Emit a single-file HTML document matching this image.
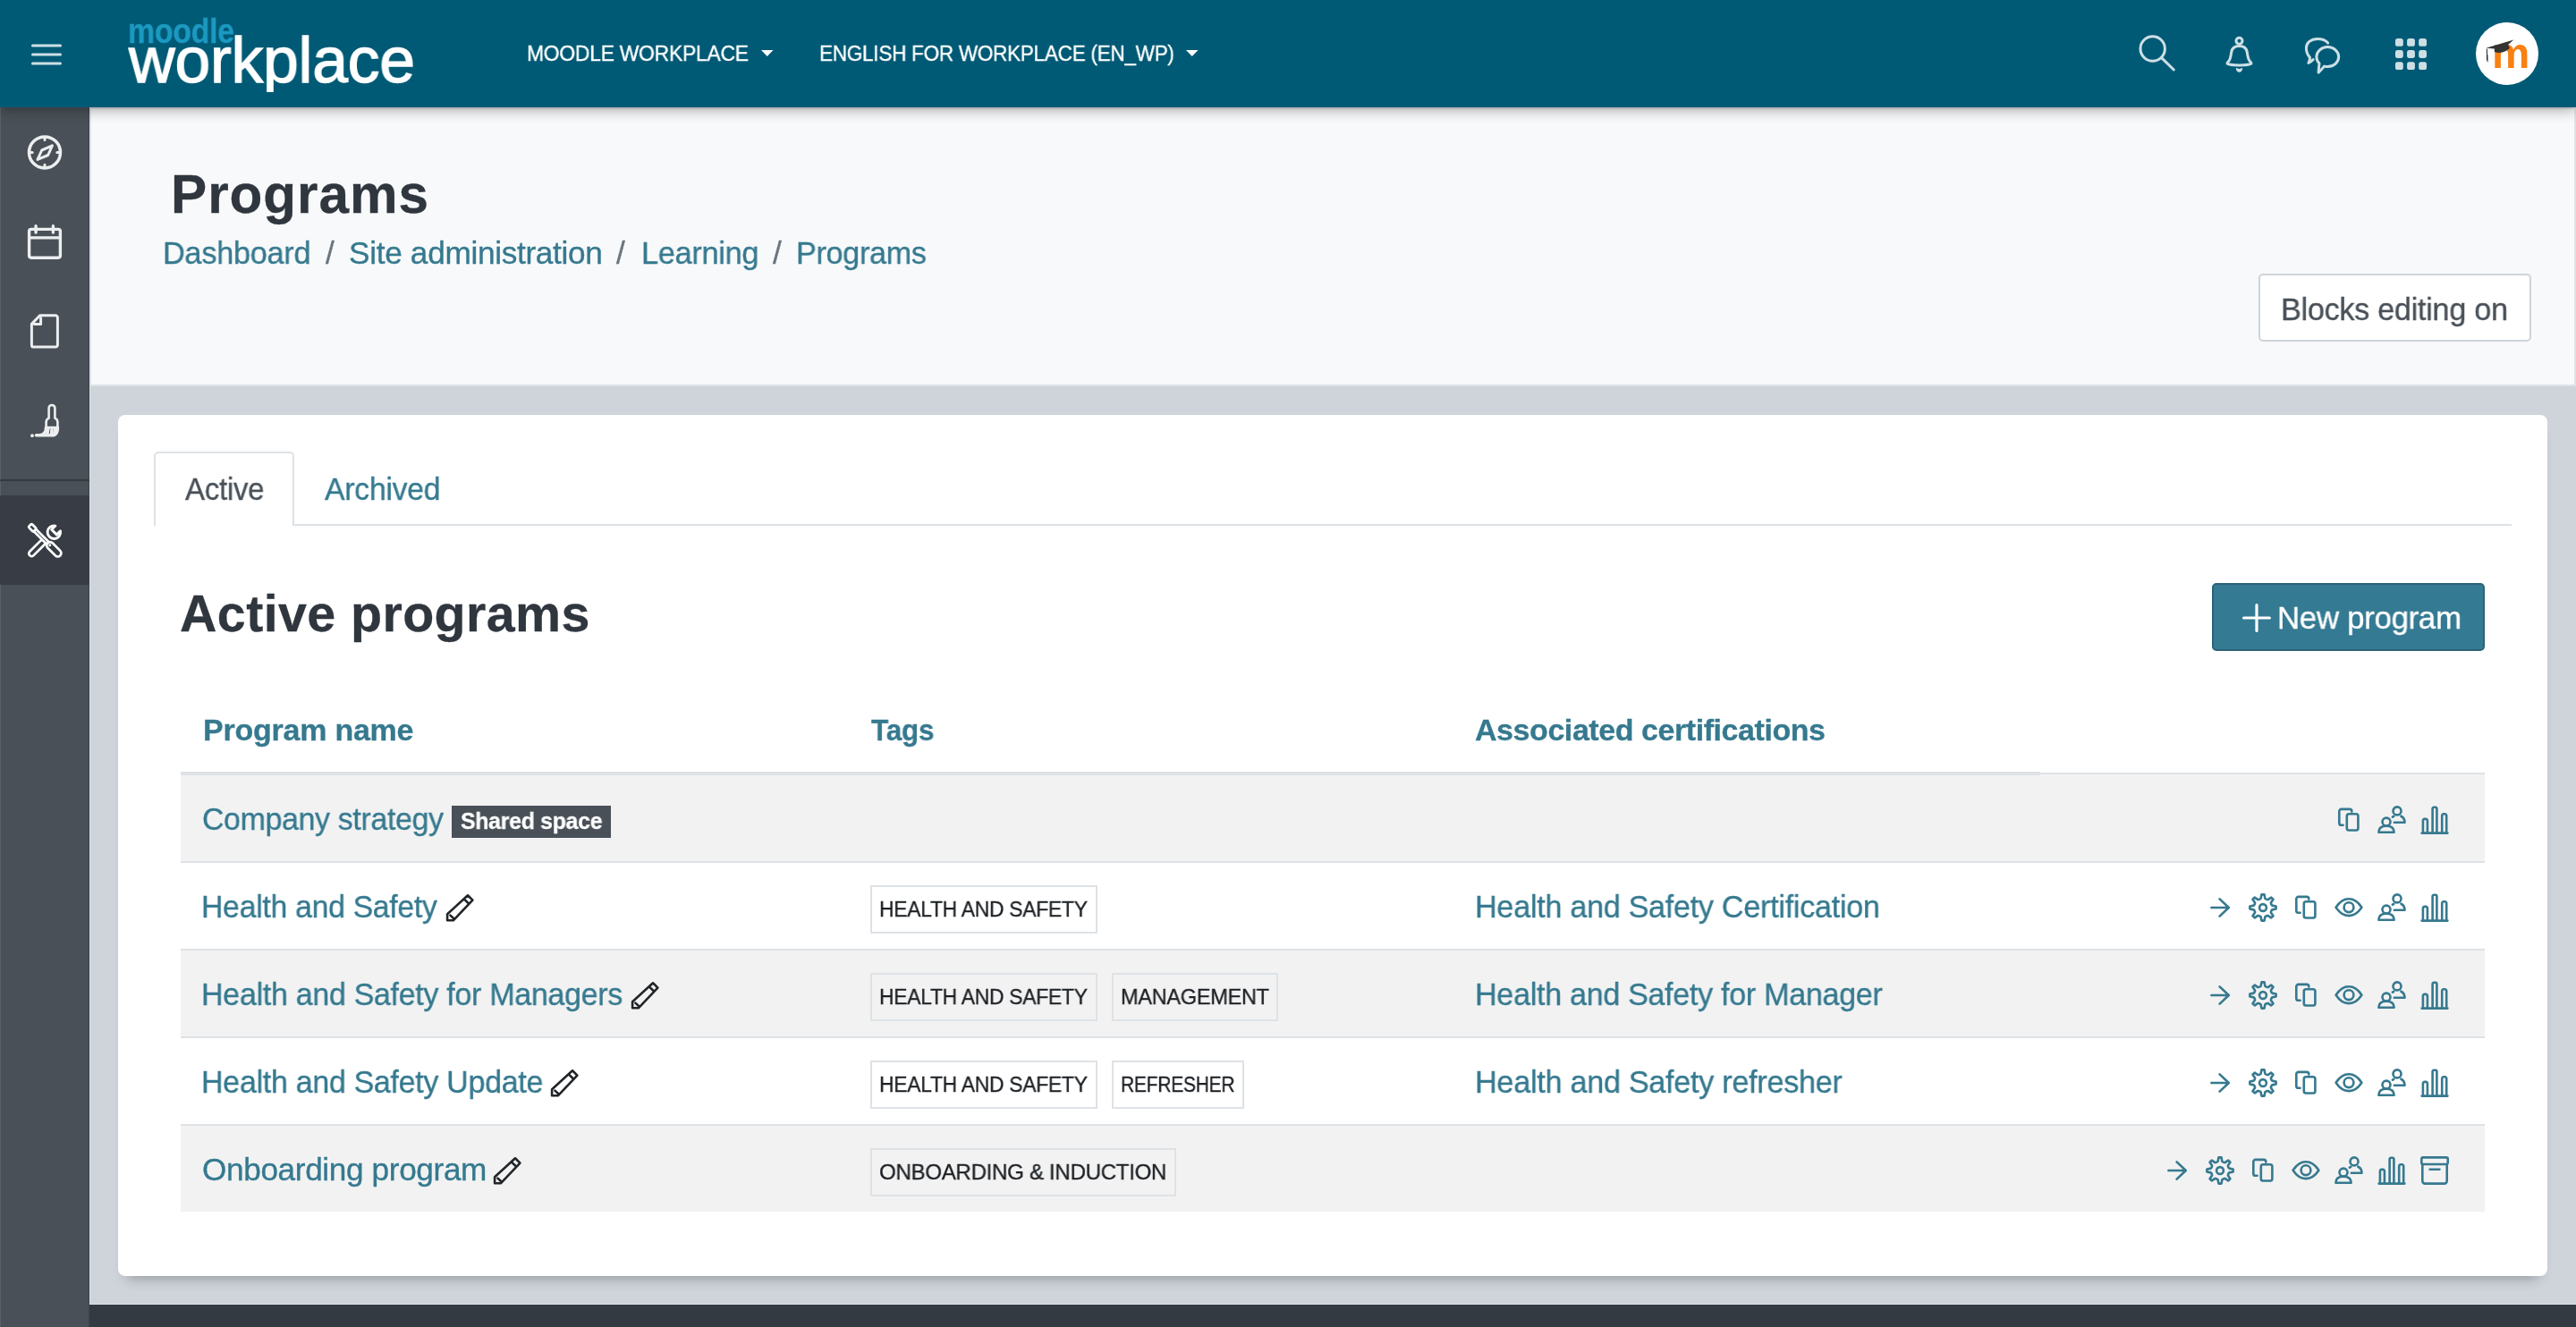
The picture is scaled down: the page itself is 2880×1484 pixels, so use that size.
<!DOCTYPE html>
<html lang="en"><head><meta charset="utf-8"><title>Programs</title>
<style>
*{box-sizing:border-box;margin:0;padding:0}
html,body{width:2880px;height:1484px;overflow:hidden}
body{position:relative;background:#ced4da;font-family:"Liberation Sans",sans-serif;color:#343a40}
.t{position:absolute;white-space:nowrap;line-height:1;display:block;will-change:transform}
a.t,a{color:#35798f;text-decoration:none}
svg{position:absolute;overflow:visible}
.abs{position:absolute}
#nav{position:absolute;left:0;top:0;width:2880px;height:120px;background:#005a75;box-shadow:0 3px 14px rgba(0,0,0,.33);z-index:10}
#side{position:absolute;left:0;top:120px;width:100px;height:1364px;background:#495057;z-index:5}
#side .act{position:absolute;left:0;top:434px;width:100px;height:100px;background:#383d45}
#side .div{position:absolute;left:0;top:416px;width:100px;height:2px;background:#343a40}
#hdr{position:absolute;left:100px;top:120px;width:2780px;height:312px;background:#f8f9fa;border:2px solid #dee2e6}
#card{position:absolute;left:132px;top:464px;width:2716px;height:963px;background:#fff;border-radius:8px;box-shadow:0 12px 14px -10px rgba(0,0,0,.31)}
#foot{position:absolute;left:100px;top:1458px;width:2780px;height:26px;background:#343a42;border-top:1px solid #dee2e6}
.btn{position:absolute;border-radius:5px}
.tag{position:absolute;height:54px;border:2px solid #dee2e6}
.row{position:absolute;left:202px;width:2576px;height:96px}
.row.s{background:#f2f2f2}
.hr{position:absolute;left:202px;width:2576px;height:2px;background:#dee2e6}
</style></head>
<body>
<div id="hdr"></div>
<div class="abs" id="hdrc" style="left:0;top:0">
<h1 class="t" style="left:190.5px;top:186.5px;font-size:60.3px;letter-spacing:0.927px;font-weight:700;color:#30363e;-webkit-text-stroke:0.3px;">Programs</h1>
<nav>
<a class="t" style="left:181.5px;top:265.2px;font-size:35.2px;letter-spacing:-0.300px;transform:scaleX(0.9747);transform-origin:0 0;-webkit-text-stroke:0.35px;">Dashboard</a>
<span class="t" style="left:364.0px;top:265.2px;font-size:35.2px;letter-spacing:0.000px;color:#6c757d;-webkit-text-stroke:0.35px;">/</span>
<a class="t" style="left:390.0px;top:265.2px;font-size:35.2px;letter-spacing:-0.309px;-webkit-text-stroke:0.35px;">Site administration</a>
<span class="t" style="left:689.0px;top:265.2px;font-size:35.2px;letter-spacing:0.000px;color:#6c757d;-webkit-text-stroke:0.35px;">/</span>
<a class="t" style="left:716.5px;top:265.2px;font-size:35.2px;letter-spacing:-0.300px;transform:scaleX(0.9748);transform-origin:0 0;-webkit-text-stroke:0.35px;">Learning</a>
<span class="t" style="left:864.0px;top:265.2px;font-size:35.2px;letter-spacing:0.000px;color:#6c757d;-webkit-text-stroke:0.35px;">/</span>
<a class="t" style="left:890.0px;top:265.2px;font-size:35.2px;letter-spacing:-0.300px;transform:scaleX(0.9703);transform-origin:0 0;-webkit-text-stroke:0.35px;">Programs</a>
</nav>
<div class="btn" style="left:2525px;top:306px;width:304.5px;height:75.5px;background:#fff;border:2px solid #ced4da"></div>
<button class="t" style="left:2550.0px;top:327.7px;font-size:35.2px;letter-spacing:-0.300px;transform:scaleX(0.9720);transform-origin:0 0;color:#495057;-webkit-text-stroke:0.35px;background:none;border:0;font-family:inherit;">Blocks editing on</button>
</div>
<section id="card"></section>
<div class="abs" style="left:0;top:0">
<div class="abs" style="left:172px;top:585.5px;width:2636px;height:2px;background:#dee2e6"></div>
<div class="abs" style="left:172px;top:505px;width:157px;height:83px;background:#fff;border:2px solid #dee2e6;border-bottom:0;border-radius:5px 5px 0 0"></div>
<a class="t" style="left:206.5px;top:529.0px;font-size:35.2px;letter-spacing:-0.300px;transform:scaleX(0.9380);transform-origin:0 0;color:#495057;-webkit-text-stroke:0.35px;">Active</a>
<a class="t" style="left:362.5px;top:529.0px;font-size:35.2px;letter-spacing:-0.300px;transform:scaleX(0.9603);transform-origin:0 0;-webkit-text-stroke:0.35px;">Archived</a>
<h2 class="t" style="left:201.0px;top:658.4px;font-size:57.4px;letter-spacing:0.394px;font-weight:700;color:#30363e;-webkit-text-stroke:0.3px;">Active programs</h2>
<div class="btn" style="left:2473px;top:652px;width:305px;height:76px;background:#357a93;border:2px solid #2b6379"></div>
<svg style="left:2506.5px;top:675px" width="32" height="32" viewBox="0 0 32 32" fill="none" stroke="#fff" stroke-width="3.2" stroke-linecap="round" stroke-linejoin="round"><path d="M16 1.6V30.4M1.6 16H30.4"/></svg>
<button class="t" style="left:2546.0px;top:673.0px;font-size:35.2px;letter-spacing:-0.300px;transform:scaleX(0.9891);transform-origin:0 0;color:#fff;-webkit-text-stroke:0.35px;background:none;border:0;font-family:inherit;">New program</button>
<a class="t" style="left:226.5px;top:799.2px;font-size:34.0px;letter-spacing:-0.235px;font-weight:700;color:#36798f;-webkit-text-stroke:0.3px;">Program name</a>
<a class="t" style="left:973.5px;top:799.2px;font-size:34.0px;letter-spacing:-0.300px;transform:scaleX(0.9285);transform-origin:0 0;font-weight:700;color:#36798f;-webkit-text-stroke:0.3px;">Tags</a>
<a class="t" style="left:1649.0px;top:799.2px;font-size:34.0px;letter-spacing:-0.436px;font-weight:700;color:#36798f;-webkit-text-stroke:0.3px;">Associated certifications</a>
<div class="abs" style="left:202px;top:863px;width:2078.5px;height:4px;background:#dee2e6"></div>
<div class="abs" style="left:2280px;top:864px;width:498px;height:2px;background:#dee2e6"></div>
<div class="abs" style="left:2280.5px;top:866px;width:497.5px;height:1px;background:#f2f2f2"></div>
<div class="row s" style="top:867px"></div>
<div class="hr" style="top:963px"></div>
<a class="t" style="left:225.5px;top:898.2px;font-size:35.2px;letter-spacing:-0.300px;transform:scaleX(0.9604);transform-origin:0 0;-webkit-text-stroke:0.35px;">Company strategy</a>
<div class="abs" style="left:504.5px;top:900.5px;width:178px;height:36.5px;background:#495057"></div>
<span class="t" style="left:514.5px;top:905.8px;font-size:25.6px;letter-spacing:-0.300px;transform:scaleX(0.9713);transform-origin:0 0;font-weight:700;color:#fff;-webkit-text-stroke:0.3px;">Shared space</span>
<svg style="left:2610px;top:900.8px" width="32" height="32" viewBox="0 0 32 32" fill="none" stroke="#36798f" stroke-width="2.6" stroke-linecap="round" stroke-linejoin="round"><path d="M19.3 6.6V6.2a2.3 2.3 0 0 0-2.3-2.3H7.6a2.3 2.3 0 0 0-2.3 2.3V19.4a2.3 2.3 0 0 0 2.3 2.3H9.6"/><rect x="13.8" y="9.3" width="12.6" height="18.2" rx="2.3"/></svg>
<svg style="left:2658px;top:900.8px" width="32" height="32" viewBox="0 0 32 32" fill="none" stroke="#36798f" stroke-width="2.6" stroke-linecap="round" stroke-linejoin="round"><circle cx="10" cy="18.1" r="4.5"/><path d="M1.4 29.8C1.4 25 5 22.7 10 22.7S18.6 25 18.6 29.8Z"/><circle cx="22" cy="5.9" r="4.5"/><path d="M16.9 12.7L18.3 11.8M26.4 11.7C29 12.9 30.4 15 30.5 18.7H18.8"/></svg>
<svg style="left:2706px;top:900.8px" width="32" height="32" viewBox="0 0 32 32" fill="none" stroke="#36798f" stroke-width="2.6" stroke-linecap="round" stroke-linejoin="round"><path d="M1.6 30.6H30.4M2.9 30.6V16.6a1.7 1.7 0 0 1 1.7-1.7h1.6a1.7 1.7 0 0 1 1.7 1.7V30.6M13.6 30.6V3.4a1.7 1.7 0 0 1 1.7-1.7h1.4a1.7 1.7 0 0 1 1.7 1.7V30.6M24.2 30.6V11a1.7 1.7 0 0 1 1.7-1.7h1.6a1.7 1.7 0 0 1 1.7 1.7V30.6"/></svg>
<div class="row" style="top:965px"></div>
<div class="hr" style="top:1061px"></div>
<a class="t" style="left:224.5px;top:996.2px;font-size:35.2px;letter-spacing:-0.300px;transform:scaleX(0.9599);transform-origin:0 0;-webkit-text-stroke:0.35px;">Health and Safety</a>
<svg style="left:497.5px;top:998.5px" width="32" height="32" viewBox="0 0 32 32" fill="none" stroke="#212529" stroke-width="2.6" stroke-linecap="round" stroke-linejoin="round"><path d="M25 2.3L30.4 7.6L8.8 30.3H2.1V23.3ZM20.8 6.4L26.3 11.8M5.4 24.6L8.8 27.8"/></svg>
<div class="tag" style="left:973px;top:990px;width:254px"></div>
<span class="t" style="left:983.0px;top:1005.1px;font-size:24.4px;letter-spacing:-0.300px;transform:scaleX(0.9384);transform-origin:0 0;color:#1d2125;-webkit-text-stroke:0.35px;">HEALTH AND SAFETY</span>
<a class="t" style="left:1648.5px;top:996.2px;font-size:35.2px;letter-spacing:-0.300px;transform:scaleX(0.9711);transform-origin:0 0;-webkit-text-stroke:0.35px;">Health and Safety Certification</a>
<svg style="left:2466px;top:998.8px" width="32" height="32" viewBox="0 0 32 32" fill="none" stroke="#36798f" stroke-width="2.6" stroke-linecap="round" stroke-linejoin="round"><path d="M6.4 16H25.6M15.6 6.4L25.8 16L15.6 25.6"/></svg>
<svg style="left:2514px;top:998.8px" width="32" height="32" viewBox="0 0 32 32" fill="none" stroke="#36798f" stroke-width="2.6" stroke-linecap="round" stroke-linejoin="round"><path d="M12.17 6.76 L13.63 5.77 L14.44 1.38 L17.56 1.38 L18.37 5.77 L19.83 6.76 L21.56 7.09 L25.24 4.56 L27.44 6.76 L24.91 10.44 L25.24 12.17 L26.23 13.63 L30.62 14.44 L30.62 17.56 L26.23 18.37 L25.24 19.83 L24.91 21.56 L27.44 25.24 L25.24 27.44 L21.56 24.91 L19.83 25.24 L18.37 26.23 L17.56 30.62 L14.44 30.62 L13.63 26.23 L12.17 25.24 L10.44 24.91 L6.76 27.44 L4.56 25.24 L7.09 21.56 L6.76 19.83 L5.77 18.37 L1.38 17.56 L1.38 14.44 L5.77 13.63 L6.76 12.17 L7.09 10.44 L4.56 6.76 L6.76 4.56 L10.44 7.09Z"/><circle cx="16" cy="16" r="3.9"/></svg>
<svg style="left:2562px;top:998.8px" width="32" height="32" viewBox="0 0 32 32" fill="none" stroke="#36798f" stroke-width="2.6" stroke-linecap="round" stroke-linejoin="round"><path d="M19.3 6.6V6.2a2.3 2.3 0 0 0-2.3-2.3H7.6a2.3 2.3 0 0 0-2.3 2.3V19.4a2.3 2.3 0 0 0 2.3 2.3H9.6"/><rect x="13.8" y="9.3" width="12.6" height="18.2" rx="2.3"/></svg>
<svg style="left:2610px;top:998.8px" width="32" height="32" viewBox="0 0 32 32" fill="none" stroke="#36798f" stroke-width="2.6" stroke-linecap="round" stroke-linejoin="round"><path d="M1.6 15.7C6 9 11 6.3 16 6.3S26 9 30.4 15.7C26 22.4 21 25.1 16 25.1S6 22.4 1.6 15.7Z"/><circle cx="16" cy="15.7" r="5.4"/></svg>
<svg style="left:2658px;top:998.8px" width="32" height="32" viewBox="0 0 32 32" fill="none" stroke="#36798f" stroke-width="2.6" stroke-linecap="round" stroke-linejoin="round"><circle cx="10" cy="18.1" r="4.5"/><path d="M1.4 29.8C1.4 25 5 22.7 10 22.7S18.6 25 18.6 29.8Z"/><circle cx="22" cy="5.9" r="4.5"/><path d="M16.9 12.7L18.3 11.8M26.4 11.7C29 12.9 30.4 15 30.5 18.7H18.8"/></svg>
<svg style="left:2706px;top:998.8px" width="32" height="32" viewBox="0 0 32 32" fill="none" stroke="#36798f" stroke-width="2.6" stroke-linecap="round" stroke-linejoin="round"><path d="M1.6 30.6H30.4M2.9 30.6V16.6a1.7 1.7 0 0 1 1.7-1.7h1.6a1.7 1.7 0 0 1 1.7 1.7V30.6M13.6 30.6V3.4a1.7 1.7 0 0 1 1.7-1.7h1.4a1.7 1.7 0 0 1 1.7 1.7V30.6M24.2 30.6V11a1.7 1.7 0 0 1 1.7-1.7h1.6a1.7 1.7 0 0 1 1.7 1.7V30.6"/></svg>
<div class="row s" style="top:1063px"></div>
<div class="hr" style="top:1159px"></div>
<a class="t" style="left:224.5px;top:1094.2px;font-size:35.2px;letter-spacing:-0.300px;transform:scaleX(0.9656);transform-origin:0 0;-webkit-text-stroke:0.35px;">Health and Safety for Managers</a>
<svg style="left:704.5px;top:1096.5px" width="32" height="32" viewBox="0 0 32 32" fill="none" stroke="#212529" stroke-width="2.6" stroke-linecap="round" stroke-linejoin="round"><path d="M25 2.3L30.4 7.6L8.8 30.3H2.1V23.3ZM20.8 6.4L26.3 11.8M5.4 24.6L8.8 27.8"/></svg>
<div class="tag" style="left:973px;top:1088px;width:254px"></div>
<span class="t" style="left:983.0px;top:1103.1px;font-size:24.4px;letter-spacing:-0.300px;transform:scaleX(0.9384);transform-origin:0 0;color:#1d2125;-webkit-text-stroke:0.35px;">HEALTH AND SAFETY</span>
<div class="tag" style="left:1243px;top:1088px;width:186px"></div>
<span class="t" style="left:1253.0px;top:1103.1px;font-size:24.4px;letter-spacing:-0.300px;transform:scaleX(0.9641);transform-origin:0 0;color:#1d2125;-webkit-text-stroke:0.35px;">MANAGEMENT</span>
<a class="t" style="left:1648.5px;top:1094.2px;font-size:35.2px;letter-spacing:-0.300px;transform:scaleX(0.9682);transform-origin:0 0;-webkit-text-stroke:0.35px;">Health and Safety for Manager</a>
<svg style="left:2466px;top:1096.8px" width="32" height="32" viewBox="0 0 32 32" fill="none" stroke="#36798f" stroke-width="2.6" stroke-linecap="round" stroke-linejoin="round"><path d="M6.4 16H25.6M15.6 6.4L25.8 16L15.6 25.6"/></svg>
<svg style="left:2514px;top:1096.8px" width="32" height="32" viewBox="0 0 32 32" fill="none" stroke="#36798f" stroke-width="2.6" stroke-linecap="round" stroke-linejoin="round"><path d="M12.17 6.76 L13.63 5.77 L14.44 1.38 L17.56 1.38 L18.37 5.77 L19.83 6.76 L21.56 7.09 L25.24 4.56 L27.44 6.76 L24.91 10.44 L25.24 12.17 L26.23 13.63 L30.62 14.44 L30.62 17.56 L26.23 18.37 L25.24 19.83 L24.91 21.56 L27.44 25.24 L25.24 27.44 L21.56 24.91 L19.83 25.24 L18.37 26.23 L17.56 30.62 L14.44 30.62 L13.63 26.23 L12.17 25.24 L10.44 24.91 L6.76 27.44 L4.56 25.24 L7.09 21.56 L6.76 19.83 L5.77 18.37 L1.38 17.56 L1.38 14.44 L5.77 13.63 L6.76 12.17 L7.09 10.44 L4.56 6.76 L6.76 4.56 L10.44 7.09Z"/><circle cx="16" cy="16" r="3.9"/></svg>
<svg style="left:2562px;top:1096.8px" width="32" height="32" viewBox="0 0 32 32" fill="none" stroke="#36798f" stroke-width="2.6" stroke-linecap="round" stroke-linejoin="round"><path d="M19.3 6.6V6.2a2.3 2.3 0 0 0-2.3-2.3H7.6a2.3 2.3 0 0 0-2.3 2.3V19.4a2.3 2.3 0 0 0 2.3 2.3H9.6"/><rect x="13.8" y="9.3" width="12.6" height="18.2" rx="2.3"/></svg>
<svg style="left:2610px;top:1096.8px" width="32" height="32" viewBox="0 0 32 32" fill="none" stroke="#36798f" stroke-width="2.6" stroke-linecap="round" stroke-linejoin="round"><path d="M1.6 15.7C6 9 11 6.3 16 6.3S26 9 30.4 15.7C26 22.4 21 25.1 16 25.1S6 22.4 1.6 15.7Z"/><circle cx="16" cy="15.7" r="5.4"/></svg>
<svg style="left:2658px;top:1096.8px" width="32" height="32" viewBox="0 0 32 32" fill="none" stroke="#36798f" stroke-width="2.6" stroke-linecap="round" stroke-linejoin="round"><circle cx="10" cy="18.1" r="4.5"/><path d="M1.4 29.8C1.4 25 5 22.7 10 22.7S18.6 25 18.6 29.8Z"/><circle cx="22" cy="5.9" r="4.5"/><path d="M16.9 12.7L18.3 11.8M26.4 11.7C29 12.9 30.4 15 30.5 18.7H18.8"/></svg>
<svg style="left:2706px;top:1096.8px" width="32" height="32" viewBox="0 0 32 32" fill="none" stroke="#36798f" stroke-width="2.6" stroke-linecap="round" stroke-linejoin="round"><path d="M1.6 30.6H30.4M2.9 30.6V16.6a1.7 1.7 0 0 1 1.7-1.7h1.6a1.7 1.7 0 0 1 1.7 1.7V30.6M13.6 30.6V3.4a1.7 1.7 0 0 1 1.7-1.7h1.4a1.7 1.7 0 0 1 1.7 1.7V30.6M24.2 30.6V11a1.7 1.7 0 0 1 1.7-1.7h1.6a1.7 1.7 0 0 1 1.7 1.7V30.6"/></svg>
<div class="row" style="top:1161px"></div>
<div class="hr" style="top:1257px"></div>
<a class="t" style="left:224.5px;top:1192.2px;font-size:35.2px;letter-spacing:-0.300px;transform:scaleX(0.9654);transform-origin:0 0;-webkit-text-stroke:0.35px;">Health and Safety Update</a>
<svg style="left:615px;top:1194.5px" width="32" height="32" viewBox="0 0 32 32" fill="none" stroke="#212529" stroke-width="2.6" stroke-linecap="round" stroke-linejoin="round"><path d="M25 2.3L30.4 7.6L8.8 30.3H2.1V23.3ZM20.8 6.4L26.3 11.8M5.4 24.6L8.8 27.8"/></svg>
<div class="tag" style="left:973px;top:1186px;width:254px"></div>
<span class="t" style="left:983.0px;top:1201.1px;font-size:24.4px;letter-spacing:-0.300px;transform:scaleX(0.9384);transform-origin:0 0;color:#1d2125;-webkit-text-stroke:0.35px;">HEALTH AND SAFETY</span>
<div class="tag" style="left:1243px;top:1186px;width:147.5px"></div>
<span class="t" style="left:1253.0px;top:1201.1px;font-size:24.4px;letter-spacing:-0.300px;transform:scaleX(0.8610);transform-origin:0 0;color:#1d2125;-webkit-text-stroke:0.35px;">REFRESHER</span>
<a class="t" style="left:1648.5px;top:1192.2px;font-size:35.2px;letter-spacing:-0.300px;transform:scaleX(0.9724);transform-origin:0 0;-webkit-text-stroke:0.35px;">Health and Safety refresher</a>
<svg style="left:2466px;top:1194.8px" width="32" height="32" viewBox="0 0 32 32" fill="none" stroke="#36798f" stroke-width="2.6" stroke-linecap="round" stroke-linejoin="round"><path d="M6.4 16H25.6M15.6 6.4L25.8 16L15.6 25.6"/></svg>
<svg style="left:2514px;top:1194.8px" width="32" height="32" viewBox="0 0 32 32" fill="none" stroke="#36798f" stroke-width="2.6" stroke-linecap="round" stroke-linejoin="round"><path d="M12.17 6.76 L13.63 5.77 L14.44 1.38 L17.56 1.38 L18.37 5.77 L19.83 6.76 L21.56 7.09 L25.24 4.56 L27.44 6.76 L24.91 10.44 L25.24 12.17 L26.23 13.63 L30.62 14.44 L30.62 17.56 L26.23 18.37 L25.24 19.83 L24.91 21.56 L27.44 25.24 L25.24 27.44 L21.56 24.91 L19.83 25.24 L18.37 26.23 L17.56 30.62 L14.44 30.62 L13.63 26.23 L12.17 25.24 L10.44 24.91 L6.76 27.44 L4.56 25.24 L7.09 21.56 L6.76 19.83 L5.77 18.37 L1.38 17.56 L1.38 14.44 L5.77 13.63 L6.76 12.17 L7.09 10.44 L4.56 6.76 L6.76 4.56 L10.44 7.09Z"/><circle cx="16" cy="16" r="3.9"/></svg>
<svg style="left:2562px;top:1194.8px" width="32" height="32" viewBox="0 0 32 32" fill="none" stroke="#36798f" stroke-width="2.6" stroke-linecap="round" stroke-linejoin="round"><path d="M19.3 6.6V6.2a2.3 2.3 0 0 0-2.3-2.3H7.6a2.3 2.3 0 0 0-2.3 2.3V19.4a2.3 2.3 0 0 0 2.3 2.3H9.6"/><rect x="13.8" y="9.3" width="12.6" height="18.2" rx="2.3"/></svg>
<svg style="left:2610px;top:1194.8px" width="32" height="32" viewBox="0 0 32 32" fill="none" stroke="#36798f" stroke-width="2.6" stroke-linecap="round" stroke-linejoin="round"><path d="M1.6 15.7C6 9 11 6.3 16 6.3S26 9 30.4 15.7C26 22.4 21 25.1 16 25.1S6 22.4 1.6 15.7Z"/><circle cx="16" cy="15.7" r="5.4"/></svg>
<svg style="left:2658px;top:1194.8px" width="32" height="32" viewBox="0 0 32 32" fill="none" stroke="#36798f" stroke-width="2.6" stroke-linecap="round" stroke-linejoin="round"><circle cx="10" cy="18.1" r="4.5"/><path d="M1.4 29.8C1.4 25 5 22.7 10 22.7S18.6 25 18.6 29.8Z"/><circle cx="22" cy="5.9" r="4.5"/><path d="M16.9 12.7L18.3 11.8M26.4 11.7C29 12.9 30.4 15 30.5 18.7H18.8"/></svg>
<svg style="left:2706px;top:1194.8px" width="32" height="32" viewBox="0 0 32 32" fill="none" stroke="#36798f" stroke-width="2.6" stroke-linecap="round" stroke-linejoin="round"><path d="M1.6 30.6H30.4M2.9 30.6V16.6a1.7 1.7 0 0 1 1.7-1.7h1.6a1.7 1.7 0 0 1 1.7 1.7V30.6M13.6 30.6V3.4a1.7 1.7 0 0 1 1.7-1.7h1.4a1.7 1.7 0 0 1 1.7 1.7V30.6M24.2 30.6V11a1.7 1.7 0 0 1 1.7-1.7h1.6a1.7 1.7 0 0 1 1.7 1.7V30.6"/></svg>
<div class="row s" style="top:1259px"></div>
<a class="t" style="left:225.5px;top:1290.2px;font-size:35.2px;letter-spacing:-0.371px;-webkit-text-stroke:0.35px;">Onboarding program</a>
<svg style="left:551px;top:1292.5px" width="32" height="32" viewBox="0 0 32 32" fill="none" stroke="#212529" stroke-width="2.6" stroke-linecap="round" stroke-linejoin="round"><path d="M25 2.3L30.4 7.6L8.8 30.3H2.1V23.3ZM20.8 6.4L26.3 11.8M5.4 24.6L8.8 27.8"/></svg>
<div class="tag" style="left:973px;top:1284px;width:342px"></div>
<span class="t" style="left:983.0px;top:1299.1px;font-size:24.4px;letter-spacing:-0.300px;transform:scaleX(0.9867);transform-origin:0 0;color:#1d2125;-webkit-text-stroke:0.35px;">ONBOARDING &amp; INDUCTION</span>
<svg style="left:2418px;top:1292.8px" width="32" height="32" viewBox="0 0 32 32" fill="none" stroke="#36798f" stroke-width="2.6" stroke-linecap="round" stroke-linejoin="round"><path d="M6.4 16H25.6M15.6 6.4L25.8 16L15.6 25.6"/></svg>
<svg style="left:2466px;top:1292.8px" width="32" height="32" viewBox="0 0 32 32" fill="none" stroke="#36798f" stroke-width="2.6" stroke-linecap="round" stroke-linejoin="round"><path d="M12.17 6.76 L13.63 5.77 L14.44 1.38 L17.56 1.38 L18.37 5.77 L19.83 6.76 L21.56 7.09 L25.24 4.56 L27.44 6.76 L24.91 10.44 L25.24 12.17 L26.23 13.63 L30.62 14.44 L30.62 17.56 L26.23 18.37 L25.24 19.83 L24.91 21.56 L27.44 25.24 L25.24 27.44 L21.56 24.91 L19.83 25.24 L18.37 26.23 L17.56 30.62 L14.44 30.62 L13.63 26.23 L12.17 25.24 L10.44 24.91 L6.76 27.44 L4.56 25.24 L7.09 21.56 L6.76 19.83 L5.77 18.37 L1.38 17.56 L1.38 14.44 L5.77 13.63 L6.76 12.17 L7.09 10.44 L4.56 6.76 L6.76 4.56 L10.44 7.09Z"/><circle cx="16" cy="16" r="3.9"/></svg>
<svg style="left:2514px;top:1292.8px" width="32" height="32" viewBox="0 0 32 32" fill="none" stroke="#36798f" stroke-width="2.6" stroke-linecap="round" stroke-linejoin="round"><path d="M19.3 6.6V6.2a2.3 2.3 0 0 0-2.3-2.3H7.6a2.3 2.3 0 0 0-2.3 2.3V19.4a2.3 2.3 0 0 0 2.3 2.3H9.6"/><rect x="13.8" y="9.3" width="12.6" height="18.2" rx="2.3"/></svg>
<svg style="left:2562px;top:1292.8px" width="32" height="32" viewBox="0 0 32 32" fill="none" stroke="#36798f" stroke-width="2.6" stroke-linecap="round" stroke-linejoin="round"><path d="M1.6 15.7C6 9 11 6.3 16 6.3S26 9 30.4 15.7C26 22.4 21 25.1 16 25.1S6 22.4 1.6 15.7Z"/><circle cx="16" cy="15.7" r="5.4"/></svg>
<svg style="left:2610px;top:1292.8px" width="32" height="32" viewBox="0 0 32 32" fill="none" stroke="#36798f" stroke-width="2.6" stroke-linecap="round" stroke-linejoin="round"><circle cx="10" cy="18.1" r="4.5"/><path d="M1.4 29.8C1.4 25 5 22.7 10 22.7S18.6 25 18.6 29.8Z"/><circle cx="22" cy="5.9" r="4.5"/><path d="M16.9 12.7L18.3 11.8M26.4 11.7C29 12.9 30.4 15 30.5 18.7H18.8"/></svg>
<svg style="left:2658px;top:1292.8px" width="32" height="32" viewBox="0 0 32 32" fill="none" stroke="#36798f" stroke-width="2.6" stroke-linecap="round" stroke-linejoin="round"><path d="M1.6 30.6H30.4M2.9 30.6V16.6a1.7 1.7 0 0 1 1.7-1.7h1.6a1.7 1.7 0 0 1 1.7 1.7V30.6M13.6 30.6V3.4a1.7 1.7 0 0 1 1.7-1.7h1.4a1.7 1.7 0 0 1 1.7 1.7V30.6M24.2 30.6V11a1.7 1.7 0 0 1 1.7-1.7h1.6a1.7 1.7 0 0 1 1.7 1.7V30.6"/></svg>
<svg style="left:2706px;top:1292.8px" width="32" height="32" viewBox="0 0 32 32" fill="none" stroke="#36798f" stroke-width="2.6" stroke-linecap="round" stroke-linejoin="round"><rect x="1.3" y="1.4" width="29.4" height="7.6" rx="1.8"/><path d="M2.3 9V27.8a2.8 2.8 0 0 0 2.8 2.8H26.9a2.8 2.8 0 0 0 2.8-2.8V9M10.6 14.7H21.4"/></svg>
</div>
<footer id="foot"></footer>
<aside id="side">
<div class="abs" style="left:0;top:0;width:1px;height:1364px;background:#596068"></div>
<div class="abs" style="left:99px;top:0;width:1px;height:1364px;background:#3e444b"></div>
<div class="div"></div>
<div class="act"></div>
<svg style="left:30px;top:30px" width="40" height="40" viewBox="0 0 40 40" fill="none" stroke="#eceef0" stroke-width="3" stroke-linecap="round" stroke-linejoin="round"><circle cx="20" cy="20.4" r="17.5" stroke-width="3.5"/><path d="M20 4.4V6.6M20 34.2V36.4M4 20.4H6.2M33.8 20.4H36" stroke-width="3"/><path d="M12 28.4L16.7 18L28.4 12.9L23.7 23.5Z" stroke-width="3"/></svg>
<svg style="left:30px;top:130px" width="40" height="40" viewBox="0 0 40 40" fill="none" stroke="#eceef0" stroke-width="3.4" stroke-linecap="round" stroke-linejoin="round"><rect x="2.6" y="6.4" width="34.8" height="31.8" rx="2.4"/><path d="M2.6 15.9H37.4M10.1 2.7V10M29.4 2.7V10"/></svg>
<svg style="left:30px;top:230px" width="40" height="40" viewBox="0 0 40 40" fill="none" stroke="#eceef0" stroke-width="3" stroke-linecap="round" stroke-linejoin="round"><path d="M14.6 2.8H32a2.4 2.4 0 0 1 2.4 2.4V35.7a2.4 2.4 0 0 1-2.4 2.4H7.8a2.4 2.4 0 0 1-2.4-2.4V12.4Z"/><path d="M15.6 5.4V12.6H8.4"/></svg>
<svg style="left:30px;top:330px" width="40" height="40" viewBox="0 0 40 40" fill="none" stroke="#eceef0" stroke-width="3" stroke-linecap="round" stroke-linejoin="round"><path d="M24.6 17.6V6.4a3.4 3.4 0 0 1 6.8 0V17.6C33.6 18.6 34.4 20 34.4 22V28H21.6V22C21.6 20 22.4 18.6 24.6 17.6Z" stroke-width="2.6"/><path d="M21.6 28C21.6 33 20 36 15 36.8H10.6M34.4 28C34.4 33 33.4 35.6 30 36.8H15" stroke-width="3.6"/><path d="M24.2 29L23 35.5M28 29L27.4 35.5M31.6 29L30.6 35.5" stroke-width="3.2"/><circle cx="6" cy="37.2" r="1.9" fill="#eceef0" stroke="none"/></svg>
<svg style="left:30.8px;top:465px" width="38.4" height="38.4" viewBox="0 0 40 40" fill="none" stroke="#fff" stroke-width="2.8" stroke-linecap="round" stroke-linejoin="round"><g transform="rotate(-45 20 20)"><rect x="-5" y="16.8" width="24" height="6.4" rx="3.2"/></g><path d="M33.65 13.40L38.03 9.02A7.6 7.6 0 1 1 32.18 3.17L27.80 7.55Z" stroke-width="3"/><g transform="rotate(45 20 20)" fill="#383d45"><rect x="-2" y="18.2" width="28" height="3.6" rx="1.2"/><rect x="-4.6" y="17.3" width="8" height="5.4" rx="1.6"/><rect x="24.6" y="16" width="20.6" height="8" rx="4"/></g><circle cx="25.8" cy="25.8" r="1.5" fill="#fff" stroke="none"/></svg>
</aside>
<header id="nav">
<svg style="left:0px;top:0px" width="120" height="120" viewBox="0 0 120 120" fill="none" stroke="#cddfe5" stroke-width="3" stroke-linecap="round" stroke-linejoin="round"><path d="M36.5 51H67.5M36.5 61H67.5M36.5 71H67.5"/></svg>
<a class="abs" style="left:0;top:0">
<span class="t" style="left:142.5px;top:14.5px;font-size:39.0px;letter-spacing:-0.300px;transform:scaleX(0.8675);transform-origin:0 0;font-weight:700;color:#1c99c1;-webkit-text-stroke:0.3px;">moodle</span>
<span class="t" style="left:143.5px;top:30.2px;font-size:73.0px;letter-spacing:-0.300px;transform:scaleX(0.9809);transform-origin:0 0;color:#fff;-webkit-text-stroke:1.3px;overflow:hidden;padding:0 4px;margin-left:-4px;height:73.4px;">workplace</span>
</a>
<a class="t" style="left:589.0px;top:47.8px;font-size:24.8px;letter-spacing:-0.300px;transform:scaleX(0.9242);transform-origin:0 0;color:#fff;-webkit-text-stroke:0.35px;">MOODLE WORKPLACE</a>
<svg style="left:851px;top:55.5px" width="13.5" height="7" viewBox="0 0 13.5 7" fill="#fff"><path d="M0 0H13.5L6.75 7Z"/></svg>
<a class="t" style="left:916.0px;top:47.8px;font-size:24.8px;letter-spacing:-0.300px;transform:scaleX(0.9091);transform-origin:0 0;color:#fff;-webkit-text-stroke:0.35px;">ENGLISH FOR WORKPLACE (EN_WP)</a>
<svg style="left:1326px;top:55.5px" width="13.5" height="7" viewBox="0 0 13.5 7" fill="#fff"><path d="M0 0H13.5L6.75 7Z"/></svg>
<svg style="left:2380px;top:30px" width="60" height="60" viewBox="0 0 60 60" fill="none" stroke="#cddfe5" stroke-width="3" stroke-linecap="round" stroke-linejoin="round"><circle cx="26.7" cy="24.5" r="13.7"/><path d="M36.6 34.6L50.3 48"/></svg>
<svg style="left:2480px;top:30px" width="50" height="60" viewBox="0 0 50 60" fill="none" stroke="#cddfe5" stroke-width="3" stroke-linecap="round" stroke-linejoin="round"><circle cx="23.5" cy="15.8" r="3.5"/><path d="M23.5 21.6C17.6 21.6 15.2 25 14.7 28.5C14.2 32 13.7 35.5 12.3 37.5C11.2 39.3 10 40 10 41C10 42 16 42.9 23.5 42.9S37 42 37 41C37 40 35.8 39.3 34.7 37.5C33.3 35.5 32.8 32 32.3 28.5C31.8 25 29.4 21.6 23.5 21.6Z"/><path d="M20.6 46.9Q23.5 48.6 26.4 46.9Q25.8 50 23.5 50Q21.2 50 20.6 46.9Z" fill="#cddfe5" stroke-width="1.6"/></svg>
<svg style="left:2570px;top:30px" width="60" height="60" viewBox="0 0 60 60" fill="none" stroke="#cddfe5" stroke-width="3" stroke-linecap="round" stroke-linejoin="round"><path d="M32.7 18.1C30 14.6 25.5 13.4 21 13.4C13.5 13.4 8.4 18 8.4 23.6C8.4 28 10 31.5 12.5 34.3C12.5 36.5 11.8 38.8 10.9 40.5C13 39.5 15 38 16.2 36.6"/><path d="M32.3 22.6C39.2 22.6 44.7 27.5 44.7 33.6C44.7 39.7 39.2 44.6 32.3 44.6C31 44.6 29.7 44.4 28.5 44.1C26.5 46.5 24.3 49.2 22.1 51.1C22.3 47.5 22.6 43.8 23 41C21 39 19.9 36.4 19.9 33.6C19.9 27.5 25.4 22.6 32.3 22.6Z"/></svg>
<svg style="left:2678px;top:43.4px" width="35" height="35" viewBox="0 0 35 35" fill="#cddfe5"><rect x="0" y="0" width="8.8" height="8.8" rx="2.6"/><rect x="13.1" y="0" width="8.8" height="8.8" rx="2.6"/><rect x="26.2" y="0" width="8.8" height="8.8" rx="2.6"/><rect x="0" y="13.1" width="8.8" height="8.8" rx="2.6"/><rect x="13.1" y="13.1" width="8.8" height="8.8" rx="2.6"/><rect x="26.2" y="13.1" width="8.8" height="8.8" rx="2.6"/><rect x="0" y="26.2" width="8.8" height="8.8" rx="2.6"/><rect x="13.1" y="26.2" width="8.8" height="8.8" rx="2.6"/><rect x="26.2" y="26.2" width="8.8" height="8.8" rx="2.6"/></svg>
<div class="abs" style="left:2768px;top:24.8px;width:70.2px;height:70.2px;border-radius:50%;background:#fff"></div>
<span class="t" style="left:2785.6px;top:35.7px;font-size:47.6px;letter-spacing:0.000px;font-weight:700;color:#f98012;letter-spacing:0;">m</span>
<svg style="left:2768px;top:24.5px" width="71" height="71" viewBox="0 0 71 71" fill="none"><path d="M11.4 28.8L42.3 19.5L36 25L38 28.6C35 32.6 27 35.6 20.8 33L20.8 29.4Z" fill="#333"/><path d="M12.3 29.5L12.6 38" stroke="#333" stroke-width="1.1"/><path d="M12.5 36.5C11.3 40 12 43 13.6 44.8L13.4 36.5Z" fill="#222"/></svg>
</header>
<div class="abs" style="left:100px;top:432px;width:1px;height:1026px;background:#dde1e5"></div>
<script>(function(){var w=window.innerWidth;if(w&&Math.abs(w-2880)>2){document.documentElement.style.width="auto";document.documentElement.style.height="auto";document.body.style.zoom=w/2880;}})();</script>
</body></html>
